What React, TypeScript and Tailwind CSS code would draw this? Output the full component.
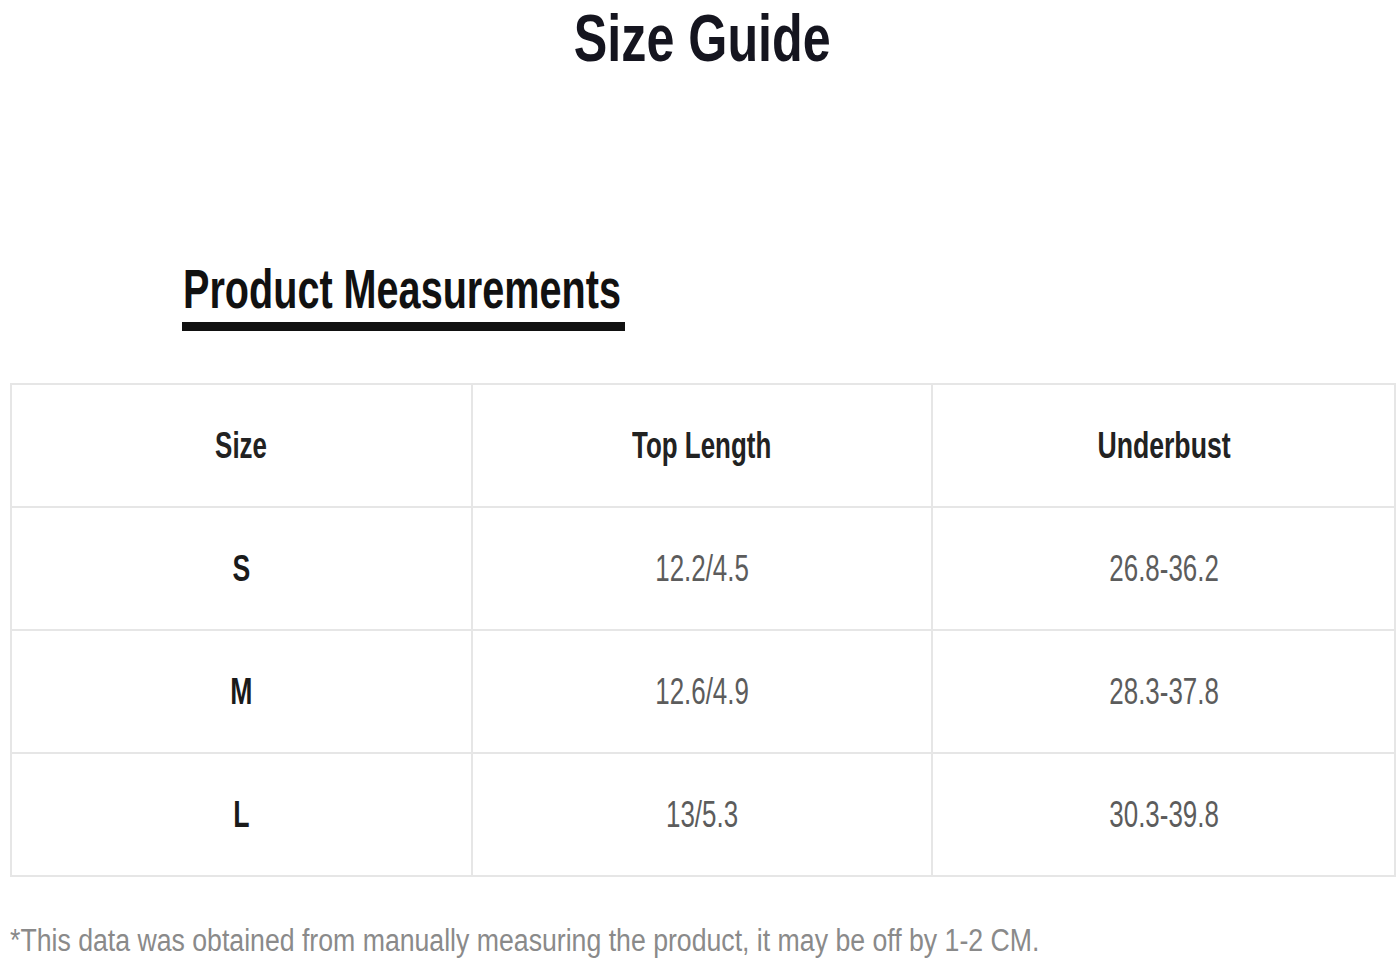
import React from 'react';

const rows = [
    { size: 'S', top: '12.2/4.5', under: '26.8-36.2' },
    { size: 'M', top: '12.6/4.9', under: '28.3-37.8' },
    { size: 'L', top: '13/5.3', under: '30.3-39.8' },
];

const Cell = ({ children, last }: { children: React.ReactNode; last?: boolean }) => (
    <div className={`flex h-[123px] items-center justify-center border-t-2 border-[#e6e6e6] ${last ? '' : 'border-r-2'}`}>
        {children}
    </div>
);

export default function App() {
    return (
        <div className="h-[964px] w-full overflow-hidden bg-white font-['Liberation_Sans',Arial,sans-serif]">
            <div className="flex justify-center pl-[6px] pt-[4px]">
                <span className="inline-block origin-center scale-x-[0.75] text-[67px] font-bold leading-[67px] text-[#15151f]">
                    Size Guide
                </span>
            </div>

            <div className="mt-[191px] pl-[183px]">
                <span className="inline-block origin-left scale-x-[0.72] whitespace-nowrap text-[55px] font-bold leading-[55px] text-[#111]">
                    Product Measurements
                </span>
            </div>
            <div className="ml-[182px] mt-[5px] h-[9px] w-[443px] bg-[#111]" />

            <div className="mx-[10px] mt-[52px] w-[1386px] border-b-2 border-l-2 border-r-2 border-[#e6e6e6]">
                <div className="grid grid-cols-3">
                    <Cell>
                        <span className="inline-block scale-x-[0.72] text-[36px] font-bold text-[#222]">Size</span>
                    </Cell>
                    <Cell>
                        <span className="inline-block scale-x-[0.72] whitespace-nowrap text-[36px] font-bold text-[#222]">Top Length</span>
                    </Cell>
                    <Cell last>
                        <span className="inline-block scale-x-[0.74] text-[36px] font-bold text-[#222]">Underbust</span>
                    </Cell>
                    {rows.map((r) => (
                        <React.Fragment key={r.size}>
                            <Cell>
                                <span className="inline-block scale-x-[0.72] text-[37px] font-bold text-[#1a1a1a]">{r.size}</span>
                            </Cell>
                            <Cell>
                                <span className="inline-block scale-x-[0.72] text-[36px] text-[#5c5c5c]">{r.top}</span>
                            </Cell>
                            <Cell last>
                                <span className="inline-block scale-x-[0.72] text-[36px] text-[#5c5c5c]">{r.under}</span>
                            </Cell>
                        </React.Fragment>
                    ))}
                </div>
            </div>

            <div className="mt-[48px] pl-[10px]">
                <span className="inline-block origin-left scale-x-[0.86] whitespace-nowrap text-[31px] leading-[31px] text-[#8a8a8a]">
                    *This data was obtained from manually measuring the product, it may be off by 1-2 CM.
                </span>
            </div>
        </div>
    );
}
